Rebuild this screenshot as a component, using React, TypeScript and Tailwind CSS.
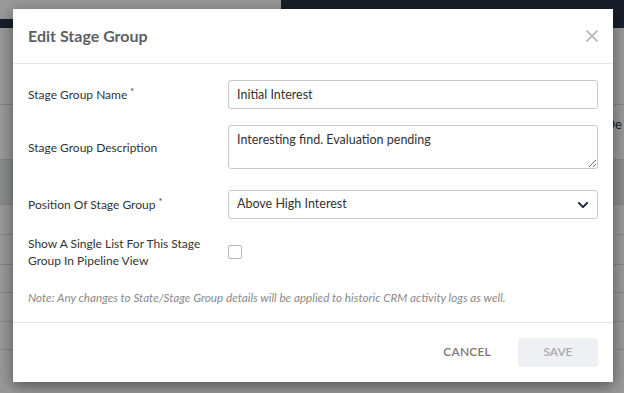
import { X } from "lucide-react";
import { FaChevronDown } from "react-icons/fa";

function Label({ text, required }: { text: string; required?: boolean }) {
  return (
    <label className="w-[200px] shrink-0 pr-4 text-[12px] leading-[17px] text-[#333]">
      {text}
      {required && <sup className="ml-[3px] text-[9px]">*</sup>}
    </label>
  );
}

function Backdrop() {
  const rows = [
    { h: "h-[77px]", bg: "bg-white", text: "" },
    { h: "h-[55px]", bg: "bg-white", text: "De" },
    { h: "h-[45px]", bg: "bg-[#e6e9ed]", text: "" },
    { h: "h-[30px]", bg: "bg-white", text: "" },
    { h: "h-[30px]", bg: "bg-white", text: "" },
    { h: "h-[28px]", bg: "bg-white", text: "" },
    { h: "h-[29px]", bg: "bg-white", text: "" },
    { h: "h-[28px]", bg: "bg-white", text: "" },
  ];
  return (
    <div className="flex h-full flex-col">
      <div className="flex h-[19px]">
        <div className="w-[281px] bg-white" />
        <div className="flex-1 bg-[#2b3346]" />
      </div>
      <div className="h-[9px] bg-[#2b3346]" />
      {rows.map((r, i) => (
        <div
          key={i}
          className={`${r.h} ${r.bg} flex items-center justify-end border-b border-[#dcdcdc] pr-[2px] text-[13px] text-[#333]`}
        >
          {r.text && <span className="mb-[14px]">{r.text}</span>}
        </div>
      ))}
      <div className="flex items-center px-[28px] pt-[6px] text-[13px] text-[#333]">
        <span>In discussion with the companies - regular priority</span>
        <span className="ml-auto mr-[35px]">Active · Portfolio</span>
      </div>
    </div>
  );
}

export default function App() {
  return (
    <div className="relative h-[393px] w-[624px] overflow-hidden font-['Lato','Open_Sans',sans-serif]">
      <Backdrop />
      <div className="absolute inset-0 bg-black/40" />

      <div className="absolute left-[13px] top-[9px] w-[600px] bg-white shadow-[0_4px_14px_rgba(0,0,0,0.45)]">
        <div className="flex h-[55px] items-center justify-between border-b border-[#e5e5e5] px-[15px]">
          <h2 className="text-[16px] font-bold text-[#5d5f66]">Edit Stage Group</h2>
          <button className="-mr-[4px] text-[#bdbdbd]">
            <X size={20} strokeWidth={2.2} />
          </button>
        </div>

        <div className="flex flex-col px-[15px] pt-[16px]">
          <div className="flex items-center">
            <Label text="Stage Group Name" required />
            <input
              readOnly
              value="Initial Interest"
              className="h-[29px] flex-1 rounded-[3px] border border-[#c9c9c9] px-[8px] text-[12.5px] text-[#333] outline-none"
            />
          </div>

          <div className="mt-[16px] flex items-center">
            <Label text="Stage Group Description" />
            <textarea
              readOnly
              value="Interesting find. Evaluation pending"
              className="h-[44px] flex-1 rounded-[3px] border border-[#c9c9c9] px-[8px] py-[6px] text-[12.5px] leading-[16px] text-[#333] outline-none"
            />
          </div>

          <div className="mt-[21px] flex items-center">
            <Label text="Position Of Stage Group" required />
            <div className="flex h-[29px] flex-1 items-center justify-between rounded-[3px] border border-[#c9c9c9] pl-[8px] pr-[8px] text-[12.5px] text-[#333]">
              <span>Above High Interest</span>
              <FaChevronDown size={12} className="text-[#1f2535]" />
            </div>
          </div>

          <div className="mt-[16px] flex items-center">
            <Label text="Show A Single List For This Stage Group In Pipeline View" />
            <span className="h-[14px] w-[14px] rounded-[2px] border border-[#b5b5b5] bg-white" />
          </div>

          <p className="mt-[20px] text-[11.7px] italic text-[#8a8a8a]">
            Note: Any changes to State/Stage Group details will be applied to historic CRM activity logs as well.
          </p>
        </div>

        <div className="mt-[15px] flex items-center justify-end gap-[27px] border-t border-[#e5e5e5] px-[15px] py-[15px]">
          <button className="text-[12px] font-semibold tracking-[0.2px] text-[#777]">CANCEL</button>
          <button className="h-[29px] w-[80px] rounded-[3px] bg-[#eef0f3] text-[12px] font-semibold text-[#a9a9a9]">
            SAVE
          </button>
        </div>
      </div>
    </div>
  );
}
